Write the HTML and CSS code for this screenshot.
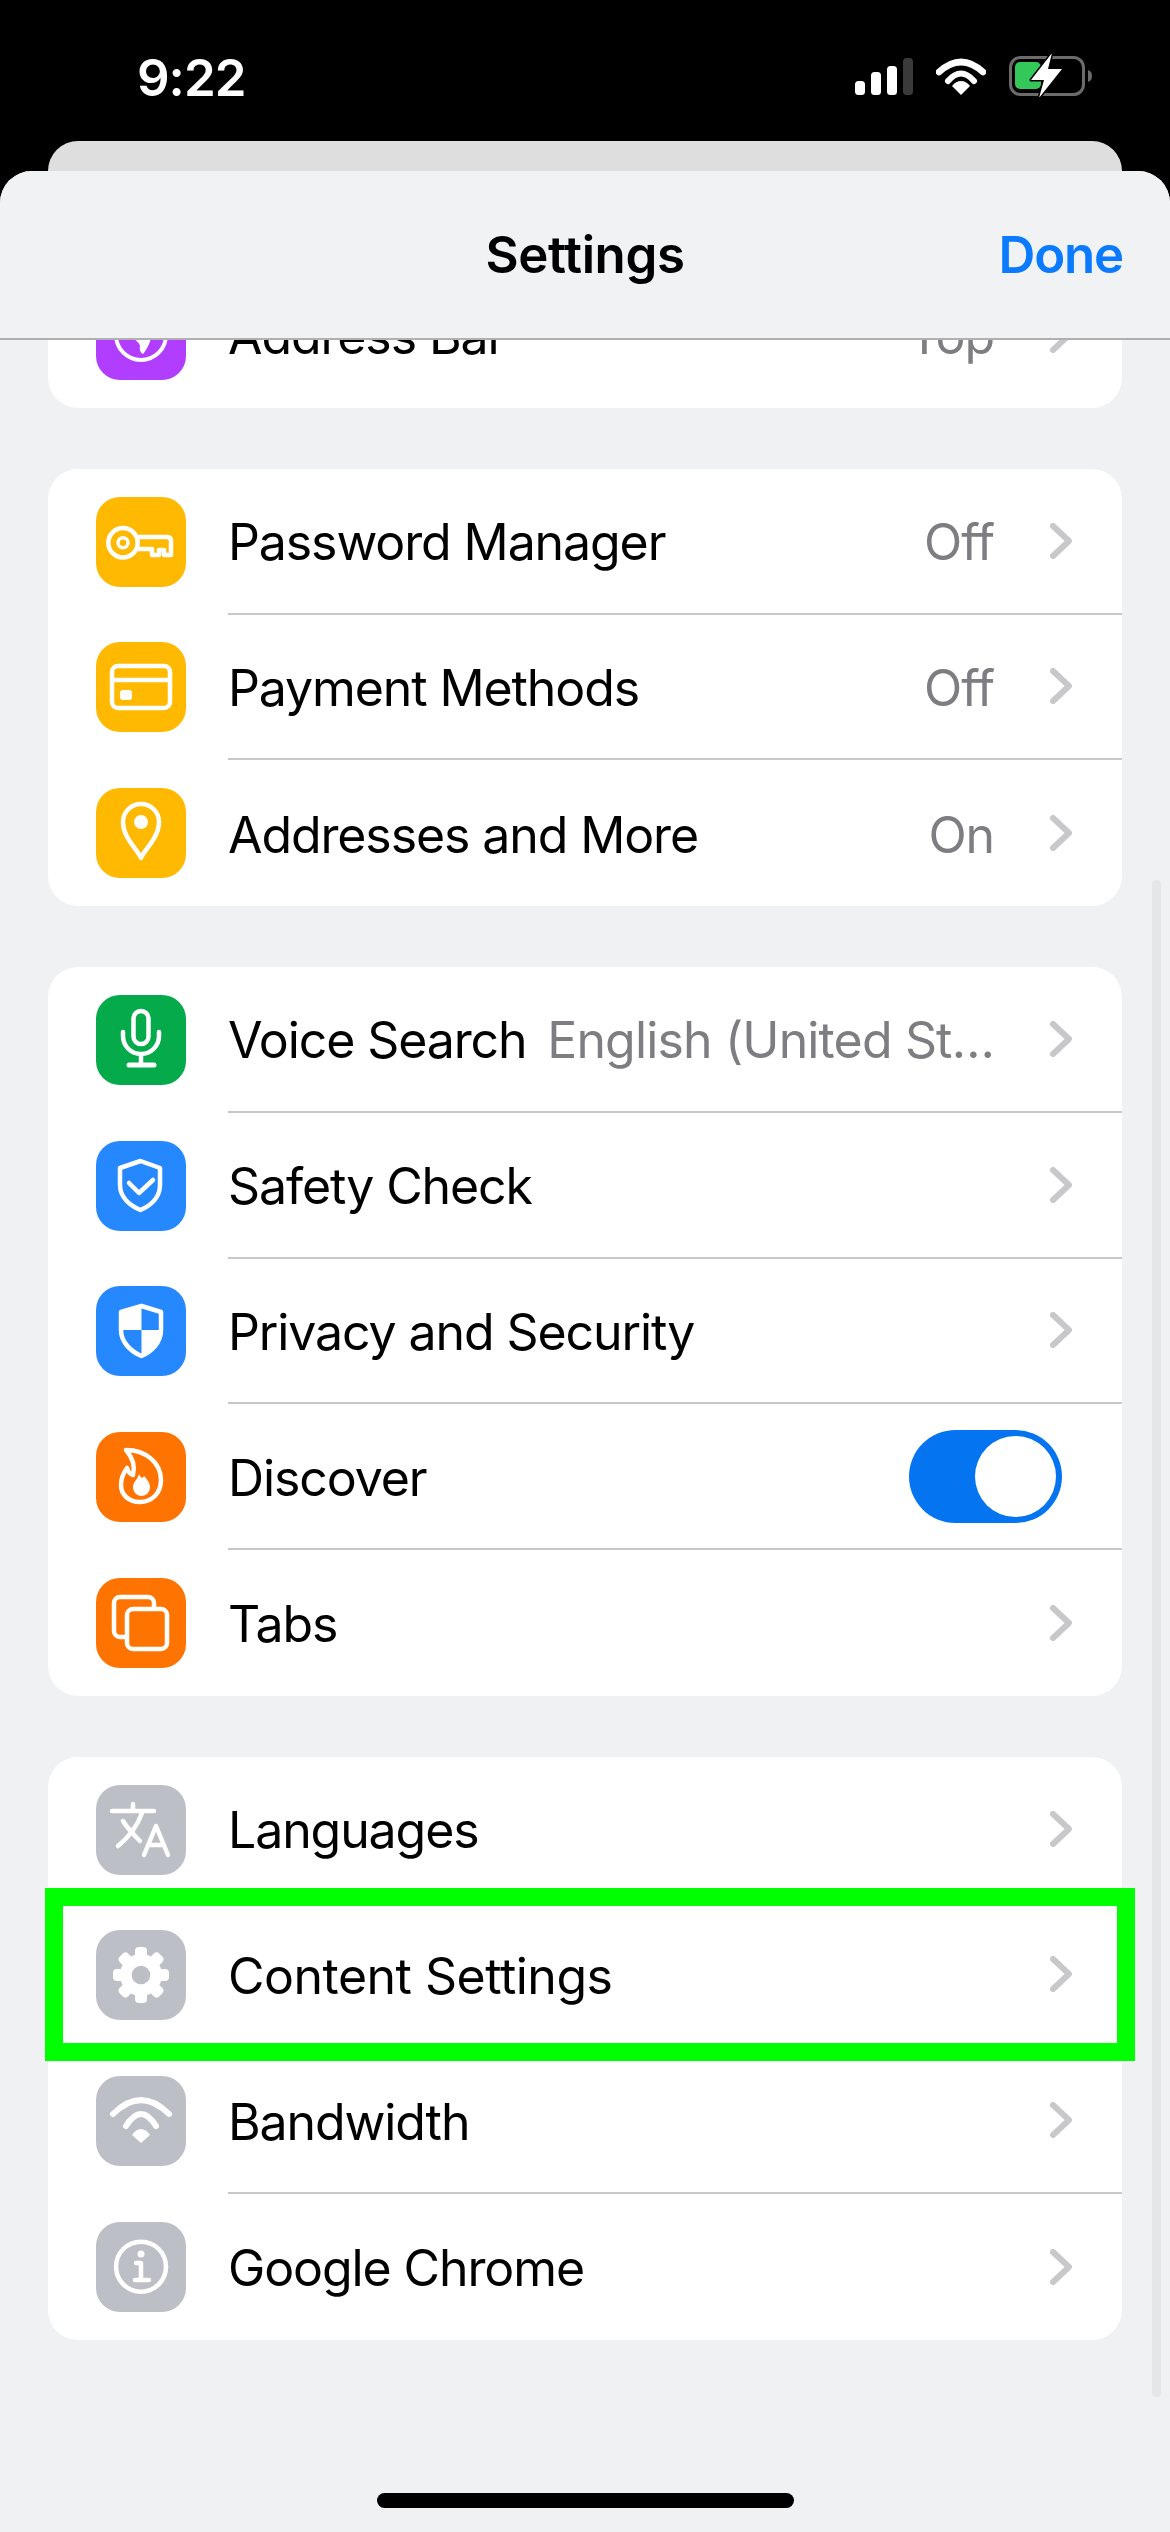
FILE: index.html
```html
<!DOCTYPE html>
<html lang="en">
<head>
<meta charset="utf-8">
<title>Settings</title>
<link rel="stylesheet" href="styles.css">
</head>
<body>
<div class="status">
  <span class="time">9:22</span>
  <div class="status-icons">
    <svg class="sig" viewBox="0 0 58 37"><rect x="0" y="23" width="10" height="14" rx="3.5" fill="#fff"/><rect x="16" y="14" width="10" height="23" rx="3.5" fill="#fff"/><rect x="32" y="8" width="10" height="29" rx="3.5" fill="#fff"/><rect x="48" y="0" width="10" height="37" rx="3.5" fill="#3a3a3a"/></svg>
    <svg class="wifi" viewBox="0 0 50 37"><path d="M3 14Q25-6 47 14" fill="none" stroke="#fff" stroke-width="6.5" stroke-linecap="round"/><path d="M12 23Q25 8 38 23" fill="none" stroke="#fff" stroke-width="6" stroke-linecap="round"/><path d="M25 23Q30 23 34 28L25 37 16 28Q20 23 25 23Z" fill="#fff"/></svg>
    <svg class="batt" viewBox="0 0 84 43"><rect x="1.5" y="3.5" width="73" height="37" rx="10" fill="none" stroke="#6b6b6b" stroke-width="3"/><path d="M79 16C82 17 83 19 83 22 83 25 82 27 79 28Z" fill="#6b6b6b"/><rect x="6" y="8" width="26" height="27" rx="5" fill="#34c759"/><path d="M43-1 22 26H35L30 44 53 15H39Z" fill="#fff" stroke="#000" stroke-width="3" stroke-linejoin="round" paint-order="stroke"/></svg>
  </div>
</div>
<div class="back-sheet"></div>
<main class="sheet">
  <header class="nav">
    <h1 class="nav-title">Settings</h1>
    <span class="nav-done">Done</span>
  </header>
  <div class="scroller">
    <section class="card card-first">
      <div class="row row-last">
        <span class="tile purple"><svg viewBox="0 0 90 90"><circle cx="45" cy="45" r="25" class="s35"/><path d="M36 38H56C56 50 52 58 47 64 45 63 43 60 44 56 43 52 39 50 36 47Z" class="f"/></svg></span>
        <div class="row-main"><span class="label">Address Bar</span><span class="value">Top</span><svg class="chev" viewBox="0 0 22 36"><path d="M3 3 19 18 3 33"/></svg></div>
      </div>
    </section>
    <section class="card">
      <div class="row">
        <span class="tile amber"><svg viewBox="0 0 90 90"><circle cx="27" cy="45.7" r="14.7" class="s"/><circle cx="27" cy="45.7" r="5" class="s3"/><path d="M41 40H71Q75 40 75 44V58H68V53H63V58H56V52H41" class="s"/></svg></span>
        <div class="row-main"><span class="label">Password Manager</span><span class="value">Off</span><svg class="chev" viewBox="0 0 22 36"><path d="M3 3 19 18 3 33"/></svg></div>
      </div>
      <div class="row">
        <span class="tile amber"><svg viewBox="0 0 90 90"><rect x="16" y="24" width="58" height="42" rx="6" class="s"/><path d="M16 38H74" class="s"/><rect x="24" y="48" width="12" height="10" rx="3" class="f"/></svg></span>
        <div class="row-main"><span class="label">Payment Methods</span><span class="value">Off</span><svg class="chev" viewBox="0 0 22 36"><path d="M3 3 19 18 3 33"/></svg></div>
      </div>
      <div class="row row-last">
        <span class="tile amber"><svg viewBox="0 0 90 90"><path d="M45 70C42 62 27 50 27 34A18 18 0 0 1 63 34C63 50 48 62 45 70Z" class="s"/><circle cx="45" cy="34" r="7" class="f"/></svg></span>
        <div class="row-main"><span class="label">Addresses and More</span><span class="value">On</span><svg class="chev" viewBox="0 0 22 36"><path d="M3 3 19 18 3 33"/></svg></div>
      </div>
    </section>
    <section class="card">
      <div class="row">
        <span class="tile green"><svg viewBox="0 0 90 90"><rect x="37.5" y="16" width="15" height="33" rx="7.5" class="s"/><path d="M27 37V41A18 18 0 0 0 63 41V37M45 59V69" class="s"/><path d="M33 70H58" class="s5"/></svg></span>
        <div class="row-main"><span class="label">Voice Search</span><span class="value value-long">English (United St…</span><svg class="chev" viewBox="0 0 22 36"><path d="M3 3 19 18 3 33"/></svg></div>
      </div>
      <div class="row">
        <span class="tile blue"><svg viewBox="0 0 90 90"><path d="M44.500 20 64 27V44C64 57 54 65 44.500 69 35 65 24 57 24 44V27Z" class="s"/><path d="M33 42 43 52 57 39" class="s"/></svg></span>
        <div class="row-main"><span class="label">Safety Check</span><svg class="chev" viewBox="0 0 22 36"><path d="M3 3 19 18 3 33"/></svg></div>
      </div>
      <div class="row">
        <span class="tile blue"><svg viewBox="0 0 90 90"><path d="M45.500 20 65 26V44C65 57 55 66 45.500 70 36 66 25 57 25 44V26Z" class="s"/><path d="M45.500 20V44H25V26Z" class="f"/><path d="M45.500 44H65C65 57 55 66 45.500 70Z" class="f"/></svg></span>
        <div class="row-main"><span class="label">Privacy and Security</span><svg class="chev" viewBox="0 0 22 36"><path d="M3 3 19 18 3 33"/></svg></div>
      </div>
      <div class="row">
        <span class="tile orange"><svg viewBox="0 0 90 90"><path d="M30 18C50 18 65 31 65 48 65 62 55 70 44 70 33 70 25 63 25 53 25 46 28 40 31 36 32 40 34 42 37 43 39 35 37 26 30 18Z" class="s"/><path d="M43 42C45 47 47 46 48 44 52 48 54 52 54 55 54 60 50 64 45.500 64 41 64 37 60 37 55 37 50 42 47 43 42Z" class="f"/></svg></span>
        <div class="row-main"><span class="label">Discover</span><span class="toggle"><span class="knob"></span></span></div>
      </div>
      <div class="row row-last">
        <span class="tile orange"><svg viewBox="0 0 90 90"><rect x="31" y="31" width="40" height="40" rx="6" class="s"/><path d="M58 29V25A6 6 0 0 0 52 19H24A6 6 0 0 0 18 25V53A6 6 0 0 0 24 59H29" class="s"/></svg></span>
        <div class="row-main"><span class="label">Tabs</span><svg class="chev" viewBox="0 0 22 36"><path d="M3 3 19 18 3 33"/></svg></div>
      </div>
    </section>
    <section class="card">
      <div class="row">
        <span class="tile gray"><svg viewBox="0 0 90 90"><path d="M16 26H58M37 19V26M46 28C41 42 33 52 22 61M27 36C32 44 38 50 44 56M48 70 60 41 72 70M52 60H68" class="s"/></svg></span>
        <div class="row-main"><span class="label">Languages</span><svg class="chev" viewBox="0 0 22 36"><path d="M3 3 19 18 3 33"/></svg></div>
      </div>
      <div class="row row-marked">
        <span class="tile gray"><svg viewBox="0 0 90 90"><g class="f"><rect x="39" y="17" width="12" height="56" rx="4"/><rect x="39" y="17" width="12" height="56" rx="4" transform="rotate(45 45 45)"/><rect x="39" y="17" width="12" height="56" rx="4" transform="rotate(90 45 45)"/><rect x="39" y="17" width="12" height="56" rx="4" transform="rotate(135 45 45)"/><circle cx="45" cy="45" r="21"/></g><circle cx="45" cy="45" r="9.300" class="hole"/></svg></span>
        <div class="row-main"><span class="label label-wide">Content Settings</span><svg class="chev" viewBox="0 0 22 36"><path d="M3 3 19 18 3 33"/></svg></div>
        <div class="mark"></div>
      </div>
      <div class="row">
        <span class="tile gray"><svg viewBox="0 0 90 90"><path d="M17 38Q45 10 73 38" class="s6"/><path d="M30 50Q45 26 60 50" class="s6"/><path d="M45 53Q50 53 54 59L45 67 36 59Q40 53 45 53Z" class="f"/></svg></span>
        <div class="row-main"><span class="label">Bandwidth</span><svg class="chev" viewBox="0 0 22 36"><path d="M3 3 19 18 3 33"/></svg></div>
      </div>
      <div class="row row-last">
        <span class="tile gray"><svg viewBox="0 0 90 90"><circle cx="45" cy="44.700" r="25" class="s"/><circle cx="45" cy="32" r="3.500" class="f"/><path d="M40 41H45V58M39 58H53" class="s"/></svg></span>
        <div class="row-main"><span class="label">Google Chrome</span><svg class="chev" viewBox="0 0 22 36"><path d="M3 3 19 18 3 33"/></svg></div>
      </div>
    </section>
    <div class="scrollbar"></div>
  </div>
  <div class="home"></div>
</main>
</body>
</html>
```
FILE: styles.css
```css
* { box-sizing: border-box; }
html, body { margin: 0; padding: 0; }
body {
  width: 1170px;
  height: 2532px;
  background: #000;
  font-family: Inter, "Liberation Sans", sans-serif;
  overflow: hidden;
  display: flex;
  flex-direction: column;
}
.status {
  height: 141px;
  flex: none;
  color: #fff;
  display: flex;
  justify-content: space-between;
  align-items: flex-start;
  padding: 53px 77px 0 137px;
}
.time { font-size: 51px; line-height: 50px; font-weight: 600; letter-spacing: -1px; }
.status-icons { display: flex; align-items: flex-start; gap: 23px; padding-top: 5px; }
.sig { width: 58px; height: 37px; display: block; }
.wifi { width: 50px; height: 37px; display: block; }
.batt { width: 84px; height: 43px; display: block; margin-top: -4px; }
.back-sheet {
  height: 30px;
  flex: none;
  margin: 0 48px;
  background: #dedede;
  border-radius: 30px 30px 0 0;
}
.sheet {
  flex: 1;
  min-height: 0;
  background: #f0f1f3;
  border-radius: 32px 32px 0 0;
  display: flex;
  flex-direction: column;
  position: relative;
  overflow: hidden;
}
.nav {
  height: 169px;
  flex: none;
  background: #f1f2f4;
  border-bottom: 2px solid #b0b0b2;
  position: relative;
  z-index: 2;
  display: flex;
  align-items: center;
  justify-content: center;
}
.nav-title { margin: 0; font-size: 51px; font-weight: 600; color: #000; line-height: 60px; letter-spacing: -0.4px; }
.nav-done {
  position: absolute;
  right: 47px;
  top: 54px;
  font-size: 51px;
  line-height: 60px;
  font-weight: 600;
  letter-spacing: -1.2px;
  color: #0a7aff;
}
.scroller {
  flex: 1;
  min-height: 0;
  padding: 0 48px;
  display: flex;
  flex-direction: column;
  gap: 61px;
  position: relative;
}
.card { background: #fff; border-radius: 30px; flex: none; }
.card-first { margin-top: -78px; }
.row { height: 145.75px; display: flex; align-items: center; padding-left: 48px; position: relative; }
.row-main {
  flex: 1;
  min-width: 0;
  height: 100%;
  margin-left: 42px;
  padding-right: 50px;
  border-bottom: 2px solid #c8c8ca;
  display: flex;
  align-items: center;
}
.row-last .row-main { border-bottom: 0; }
.tile {
  width: 90px;
  height: 90px;
  flex: none;
  border-radius: 24px;
  display: block;
}
.tile svg { width: 90px; height: 90px; display: block; }
.purple { background: #b13dff; }
.amber { background: #ffb900; }
.green { background: #05ab4a; }
.blue { background: #2688ff; }
.orange { background: #ff7300; }
.gray { background: #bcbfc6; }
.s { fill: none; stroke: #fff; stroke-width: 4.5; stroke-linecap: round; stroke-linejoin: round; }
.s3 { fill: none; stroke: #fff; stroke-width: 3.5; }
.s35 { fill: none; stroke: #fff; stroke-width: 4; }
.s5 { fill: none; stroke: #fff; stroke-width: 5; stroke-linecap: round; }
.s6 { fill: none; stroke: #fff; stroke-width: 6; stroke-linecap: round; }
.f { fill: #fff; }
.hole { fill: #bcbfc6; }
.label { margin-top: 3px; font-size: 50px; line-height: 60px; color: #000; white-space: nowrap; letter-spacing: -1.1px; }
.label-wide { letter-spacing: -0.5px; }
.value { margin-top: 3px; margin-left: auto; font-size: 50px; line-height: 60px; color: #7d7d82; white-space: nowrap; letter-spacing: -1.1px; }
.value-long { letter-spacing: -0.85px; }
.chev { width: 22px; height: 36px; margin-left: 56px; flex: none; }
.label + .chev { margin-left: auto; }
.chev path { fill: none; stroke: #c8c8ca; stroke-width: 6; stroke-linecap: round; stroke-linejoin: round; }
.toggle {
  margin-left: auto;
  margin-right: 10px;
  width: 153px;
  height: 93px;
  border-radius: 47px;
  background: #0474f0;
  display: flex;
  justify-content: flex-end;
  align-items: center;
  padding-right: 6px;
}
.knob { width: 81px; height: 81px; border-radius: 50%; background: #fff; }
.mark {
  position: absolute;
  left: -3px;
  right: -13px;
  top: -15px;
  bottom: -13px;
  border: 18px solid #00ff00;
  pointer-events: none;
}
.row-marked { z-index: 1; }
.scrollbar {
  position: absolute;
  left: 1152px;
  top: 540px;
  width: 9px;
  height: 1517px;
  border-radius: 5px;
  background: #e5e6e8;
}
.home {
  position: absolute;
  left: 377px;
  top: 2322px;
  width: 417px;
  height: 15px;
  border-radius: 8px;
  background: #000;
}
```
